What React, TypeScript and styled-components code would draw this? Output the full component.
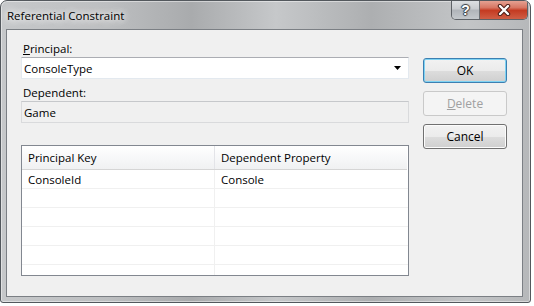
import React from 'react';
import styled, { createGlobalStyle } from 'styled-components';

const GlobalStyle = createGlobalStyle`
  html, body {
    margin: 0;
    padding: 0;
    background: #ffffff;
  }
  body {
    font-family: "Open Sans", "Noto Sans", sans-serif;
    font-size: 11.5px;
    color: #000;
  }
`;

const rows = [
  { key: 'ConsoleId', prop: 'Console' },
  { key: '', prop: '' },
  { key: '', prop: '' },
  { key: '', prop: '' },
  { key: '', prop: '' },
  { key: '', prop: '' },
];

const App = () => {
  return (
    <>
      <GlobalStyle />
      <Window>
        <TitleBar>
          <Title>Referential Constraint</Title>
          <CaptionButtons>
            <HelpButton>?</HelpButton>
            <CloseButton>
              <svg width="16" height="12" viewBox="0 0 16 12">
                <path d="M4 2 L12 10 M12 2 L4 10" stroke="#4a1d16" strokeWidth="4.4" strokeLinecap="round" />
                <path d="M4 2 L12 10 M12 2 L4 10" stroke="#ffffff" strokeWidth="2.4" strokeLinecap="round" />
              </svg>
            </CloseButton>
          </CaptionButtons>
        </TitleBar>

        <Client>
          <MainColumn>
            <FieldLabel>
              <u>P</u>rincipal:
            </FieldLabel>
            <ComboBox>
              <span>ConsoleType</span>
              <svg width="8" height="5" viewBox="0 0 8 5">
                <path d="M0 0 H7 L3.5 4 Z" fill="#000" />
              </svg>
            </ComboBox>

            <FieldLabel $spaced>Dependent:</FieldLabel>
            <ReadOnlyBox>Game</ReadOnlyBox>

            <Grid>
              <HeaderRow>
                <HeaderCell>Principal Key</HeaderCell>
                <HeaderCell $last>Dependent Property</HeaderCell>
              </HeaderRow>
              <GridBody>
                {rows.map((row, i) => (
                  <Row key={i}>
                    <Cell>{row.key}</Cell>
                    <Cell $last>{row.prop}</Cell>
                  </Row>
                ))}
              </GridBody>
            </Grid>
          </MainColumn>

          <ButtonColumn>
            <DialogButton $variant="default">OK</DialogButton>
            <DialogButton $variant="disabled">
              <u>D</u>elete
            </DialogButton>
            <DialogButton>Cancel</DialogButton>
          </ButtonColumn>
        </Client>
      </Window>
    </>
  );
};

const Window = styled.div`
  width: 531px;
  height: 303px;
  box-sizing: border-box;
  border: 1px solid #53585d;
  border-radius: 7px 7px 3px 3px;
  background: linear-gradient(
    90deg,
    #c6c8ca 0%,
    #bdbfc1 20%,
    #a9abad 36%,
    #c6c8ca 52%,
    #adafb1 70%,
    #c3c5c7 88%,
    #b6b8ba 100%
  );
  box-shadow: inset 0 0 0 1px rgba(255, 255, 255, 0.45);
  display: flex;
  flex-direction: column;
  padding-bottom: 5px;
  overflow: hidden;
`;

const TitleBar = styled.div`
  height: 28px;
  flex-shrink: 0;
  display: flex;
  align-items: flex-start;
  padding: 0 2px 0 6px;
`;

const Title = styled.div`
  font-size: 11.5px;
  line-height: 16px;
  margin-top: 7px;
  color: #000;
  text-shadow: 0 0 6px #ffffff, 0 0 10px #ffffff, 0 0 14px rgba(255, 255, 255, 0.8);
`;

const CaptionButtons = styled.div`
  margin-left: auto;
  margin-top: -1px;
  display: flex;
  height: 19px;
  border: 1px solid #5d6166;
  border-top: none;
  border-radius: 0 0 5px 5px;
  overflow: hidden;
`;

const HelpButton = styled.div`
  width: 27px;
  height: 100%;
  border-right: 1px solid #6c7075;
  background: linear-gradient(180deg, #dfe2e5 0%, #c9ccd0 45%, #b1b5ba 55%, #c4c8cc 100%);
  display: flex;
  align-items: center;
  justify-content: center;
  font-family: "Liberation Sans", sans-serif;
  font-weight: bold;
  font-size: 14px;
  color: #ffffff;
  text-shadow: 0 0 1px #3d4146, 1px 0 1px #3d4146, -1px 0 1px #3d4146, 0 1px 1px #3d4146, 0 -1px 1px #3d4146;
`;

const CloseButton = styled.div`
  width: 47px;
  height: 100%;
  background: linear-gradient(180deg, #e7a899 0%, #d77663 40%, #c43b22 55%, #cf5e45 100%);
  display: flex;
  align-items: center;
  justify-content: center;
`;

const Client = styled.div`
  flex: 1;
  margin: 0 7px 0 5px;
  box-sizing: border-box;
  border: 1px solid #7b7f84;
  background: #f0f0f0;
  display: flex;
  padding: 11px 15px 0 14px;
  gap: 14px;
`;

const MainColumn = styled.div`
  width: 388px;
  display: flex;
  flex-direction: column;
`;

const FieldLabel = styled.div<{ $spaced?: boolean }>`
  height: 16px;
  line-height: 16px;
  padding-left: 2px;
  margin-top: ${(p) => (p.$spaced ? '6px' : '0')};
`;

const ComboBox = styled.div`
  height: 22px;
  box-sizing: border-box;
  background: #ffffff;
  border: 1px solid #e3e9ef;
  border-top-color: #abadb3;
  display: flex;
  align-items: center;
  justify-content: space-between;
  padding: 0 6px 0 2px;

  svg {
    display: block;
  }
`;

const ReadOnlyBox = styled.div`
  height: 22px;
  box-sizing: border-box;
  border: 1px solid #d9dadc;
  border-top-color: #c6c8cb;
  display: flex;
  align-items: center;
  padding-left: 2px;
`;

const Grid = styled.div`
  margin-top: 22px;
  height: 131px;
  box-sizing: border-box;
  border: 1px solid #828790;
  background: #ffffff;
  display: flex;
  flex-direction: column;
  overflow: hidden;
`;

const HeaderRow = styled.div`
  display: grid;
  grid-template-columns: 193px 1fr;
  height: 24px;
  box-sizing: border-box;
  border-bottom: 1px solid #d5d5d5;
  background: linear-gradient(180deg, #ffffff 0%, #f7f8f9 50%, #f0f1f2 100%);
  margin-right: 1px;
`;

const HeaderCell = styled.div<{ $last?: boolean }>`
  display: flex;
  align-items: center;
  padding-left: 6px;
  border-right: ${(p) => (p.$last ? 'none' : '1px solid #e3e4e8')};
`;

const GridBody = styled.div`
  flex: 1;
  overflow: hidden;
`;

const Row = styled.div`
  display: grid;
  grid-template-columns: 193px 1fr;
  height: 19px;
  box-sizing: border-box;
  border-bottom: 1px solid #f0f0f0;
`;

const Cell = styled.div<{ $last?: boolean }>`
  display: flex;
  align-items: center;
  padding-left: 6px;
  border-right: ${(p) => (p.$last ? 'none' : '1px solid #f0f0f0')};
`;

const ButtonColumn = styled.div`
  width: 84px;
  display: flex;
  flex-direction: column;
  gap: 8px;
  padding-top: 17px;
`;

const DialogButton = styled.div<{ $variant?: 'default' | 'disabled' }>`
  height: 25px;
  box-sizing: border-box;
  border-radius: 3px;
  display: flex;
  align-items: center;
  justify-content: center;
  font-size: 12px;
  border: 1px solid
    ${(p) => (p.$variant === 'default' ? '#3c7fb1' : p.$variant === 'disabled' ? '#c9c9c9' : '#707070')};
  color: ${(p) => (p.$variant === 'disabled' ? '#a0a0a0' : '#000')};
  background: ${(p) =>
    p.$variant === 'disabled'
      ? '#f4f4f4'
      : 'linear-gradient(180deg, #f2f2f2 0%, #ebebeb 50%, #dddddd 51%, #cfcfcf 100%)'};
  box-shadow: ${(p) =>
    p.$variant === 'default'
      ? 'inset 0 0 0 1px #7fd3f3'
      : p.$variant === 'disabled'
      ? 'none'
      : 'inset 0 0 0 1px #fcfcfc'};
`;

export default App;
